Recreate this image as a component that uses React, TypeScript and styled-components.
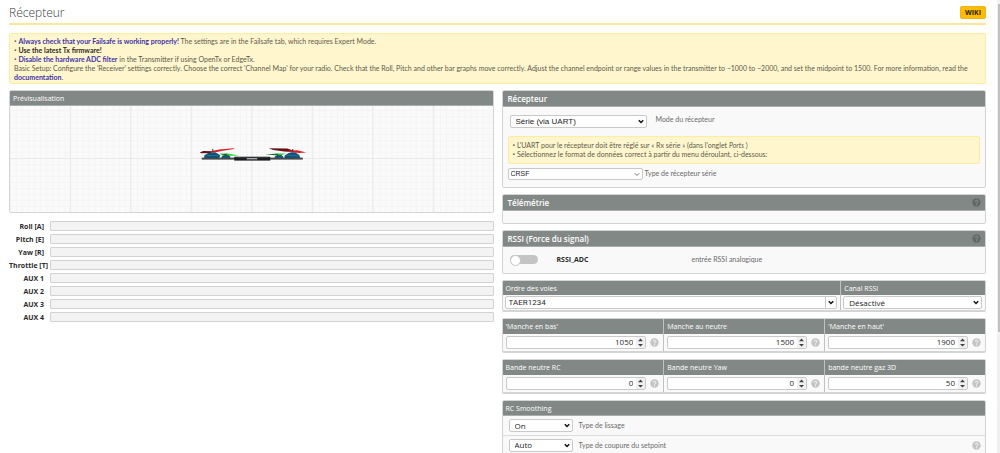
import React from "react";
import styled, { createGlobalStyle } from "styled-components";

const GlobalStyle = createGlobalStyle`
  * { box-sizing: border-box; }
  body {
    margin: 0;
    background: #fff;
    color: #6a6a6a;
    font-family: "Open Sans", "Noto Sans", sans-serif;
    font-size: 7px;
    line-height: 9px;
    overflow: hidden;
  }
  input, select, button { font: inherit; margin: 0; }
`;

const Page = styled.div`
  display: flex;
  height: 100vh;
  overflow: hidden;
`;

const Content = styled.main`
  flex: 1;
  min-width: 0;
  padding: 4px 11px 0 9px;
`;

const ScrollTrack = styled.div`
  width: 3px;
  padding: 4px 0 0 1px;
  background: #f1f1f1;
`;

const ScrollThumb = styled.div`
  height: 73%;
  background: #c1c1c1;
`;

const TitleBar = styled.header`
  display: flex;
  justify-content: space-between;
  align-items: flex-start;
  height: 21px;
  border-bottom: 2px solid #ffe596;
`;

const Title = styled.h1`
  margin: 0;
  font-size: 12px;
  line-height: 18px;
  font-weight: 300;
  color: #3c3c3c;
`;

const WikiLink = styled.a`
  margin-top: 2px;
  width: 26px;
  height: 13px;
  border-radius: 2px;
  background: #ffbb00;
  border: 1px solid #efb41a;
  color: #2a2400;
  font-size: 7px;
  line-height: 11px;
  font-weight: 700;
  text-align: center;
  text-decoration: none;
`;

const Note = styled.div<{ $inner?: boolean }>`
  margin: ${(p) => (p.$inner ? "8px 0 4px" : "8px 0 6px")};
  padding: ${(p) => (p.$inner ? "4px 4px" : "3px 4px 1px")};
  background: #fff6cd;
  border: 1px solid #ffec9e;
  border-radius: 2px;
  color: #5e5a4c;
  font-family: Lato, "Open Sans", sans-serif;
  b { color: #2e2b20; }
  a { color: #3f34a8; font-weight: 700; text-decoration: none; }
`;

const NoteLine = styled.div<{ $bullet?: boolean }>`
  &::before {
    content: ${(p) => (p.$bullet ? '"• "' : "none")};
    font-family: "Open Sans", sans-serif;
  }
`;

const Columns = styled.div`
  display: grid;
  grid-template-columns: 1fr 1fr;
  gap: 8px;
  align-items: start;
`;

const Column = styled.section`
  display: flex;
  flex-direction: column;
  gap: 6px;
  min-width: 0;
`;

const Panel = styled.section`
  border: 1px solid #d3d5d4;
  border-radius: 2px;
  background: #f9f9f9;
  overflow: hidden;
`;

const PanelHead = styled.h2<{ $small?: boolean }>`
  display: flex;
  justify-content: space-between;
  align-items: center;
  margin: 0;
  height: ${(p) => (p.$small ? 15 : 16)}px;
  padding: 0 4px 0 ${(p) => (p.$small ? 3 : 5)}px;
  background: #828885;
  border-bottom: 1px solid #a9adab;
  color: #fff;
  font-size: ${(p) => (p.$small ? 7 : 8)}px;
  font-weight: ${(p) => (p.$small ? 400 : 600)};
`;

const PreviewSvg = styled.svg`
  display: block;
  width: 100%;
  height: 106px;
  background: #fafafa;
`;

const Bars = styled.div`
  display: flex;
  flex-direction: column;
  gap: 3px;
  padding-top: 2px;
`;

const BarRow = styled.div`
  display: flex;
  align-items: center;
  gap: 6px;
  height: 10px;
`;

const BarLabel = styled.span`
  width: 35px;
  white-space: nowrap;
  text-align: right;
  font-weight: 700;
  color: #2b2b2b;
`;

const Bar = styled.div`
  flex: 1;
  height: 10px;
  border: 1px solid #d2d2d2;
  border-radius: 1px;
  background: #f3f3f3;
`;

const PanelBody = styled.div`
  padding: 8px 5px 7px;
`;

const Caption = styled.label`
  font-family: Lato, "Open Sans", sans-serif;
`;

const Field = styled.div<{ $indent?: boolean }>`
  display: flex;
  align-items: center;
  gap: ${(p) => (p.$indent ? 9 : 2)}px;
  padding-left: ${(p) => (p.$indent ? 2 : 0)}px;
  label { margin-bottom: ${(p) => (p.$indent ? 4 : 1)}px; }
`;

const SelectBox = styled.span<{ $w?: number; $h?: number }>`
  display: grid;
  align-items: center;
  width: ${(p) => (p.$w ? `${p.$w}px` : "100%")};
  height: ${(p) => p.$h || 13}px;
  > * { grid-area: 1 / 1; }
  svg { justify-self: end; margin-right: 3px; pointer-events: none; }
`;

const SelectControl = styled.select<{ $arial?: boolean; $small?: boolean; $h?: number }>`
  appearance: none;
  width: 100%;
  height: ${(p) => p.$h || 13}px;
  padding: 0 10px 0 ${(p) => (p.$small ? 2 : 5)}px;
  border: 1px solid #c9c9c9;
  border-radius: 2px;
  background: #fff;
  color: #1c1c1c;
  font-family: ${(p) => (p.$arial ? '"Liberation Sans", sans-serif' : '"Open Sans", sans-serif')};
  font-size: ${(p) => (p.$small ? 7 : 8)}px;
  line-height: 10px;
`;

const EmptyBody = styled.div`
  height: 12px;
`;

const RssiRow = styled.div`
  display: grid;
  grid-template-columns: 47px 135px 1fr;
  align-items: center;
  height: 26px;
  padding: 0 6px 2px 7px;
`;

const Switch = styled.input`
  appearance: none;
  display: block;
  width: 28px;
  height: 9px;
  border-radius: 5px;
  background: #c4c4c4;
  &::before {
    content: "";
    display: block;
    width: 9px;
    height: 9px;
    border: 1px solid #c4c4c4;
    border-radius: 50%;
    background: #fff;
  }
  &:checked { background: #ffbb00; }
  &:checked::before { margin-left: auto; }
`;

const SwitchLabel = styled.label`
  font-weight: 700;
  color: #2b2b2b;
`;

const Table = styled.table<{ $pad: string; $head: number }>`
  width: 100%;
  table-layout: fixed;
  border-collapse: separate;
  border-spacing: 0;
  border: 1px solid #d3d5d4;
  border-bottom-width: 2px;
  border-radius: 2px;
  background: #f9f9f9;
  th {
    height: ${(p) => p.$head}px;
    padding: 0 3px;
    background: #828885;
    color: #fff;
    font-weight: 400;
    text-align: left;
  }
  td { padding: ${(p) => p.$pad}; }
  th + th, td + td { border-left: 1px solid #bfc2c0; }
`;

const TableCol = styled.col<{ $w: string }>`
  width: ${(p) => p.$w};
`;

const Combo = styled.span`
  display: flex;
  height: 13px;
  border: 1px solid #c9c9c9;
  border-radius: 2px;
  background: #fff;
  input {
    flex: 1;
    min-width: 0;
    padding: 0 3px;
    border: 0;
    background: transparent;
    color: #2b2b2b;
    font-family: Roboto, "Liberation Sans", sans-serif;
    font-size: 8px;
  }
  button {
    display: grid;
    place-items: center;
    width: 11px;
    padding: 0;
    border: 0;
    border-left: 1px solid #c9c9c9;
    background: transparent;
  }
`;

const NumberCell = styled.span`
  display: flex;
  align-items: center;
  gap: 4px;
`;

const NumberBox = styled.span`
  flex: 1;
  display: flex;
  align-items: stretch;
  height: 13px;
  border: 1px solid #c9c9c9;
  border-radius: 2px;
  background: #fff;
  overflow: hidden;
  input {
    flex: 1;
    width: 0;
    min-width: 0;
    padding: 0 3px 1px 0;
    border: 0;
    background: transparent;
    color: #2b2b2b;
    font-size: 8px;
    line-height: 10px;
    text-align: right;
    appearance: textfield;
  }
  input::-webkit-inner-spin-button { display: none; }
  svg { display: block; height: 11px; background: #f1f1f1; }
`;

const SmoothingRow = styled.div`
  display: flex;
  align-items: center;
  gap: 6px;
  height: 19px;
  padding: 0 4px 0 6px;
  & + & { border-top: 1px solid #dcdcdc; }
  label { flex: 1; }
`;

function Arrow({ thin }: { thin?: boolean }) {
  return (
    <svg width="6" height="5" viewBox="0 0 6 5" aria-hidden="true">
      <path d="M0.8 1.2 L3 3.5 L5.2 1.2" fill="none" stroke={thin ? "#555" : "#111"} strokeWidth={thin ? 0.8 : 1.5} />
    </svg>
  );
}

function Help({ dark }: { dark?: boolean }) {
  return (
    <svg width="9" height="9" viewBox="0 0 18 18" role="img" aria-label="Aide">
      <circle cx="9" cy="9" r="8.4" fill={dark ? "#646866" : "#c4c4c4"} />
      <path d="M6.4 7 C6.4 3.8 11.8 3.8 11.8 7 C11.8 9 9.1 8.8 9.1 11" fill="none" stroke={dark ? "#8f9492" : "#fff"} strokeWidth="2" />
      <circle cx="9.1" cy="13.6" r="1.3" fill={dark ? "#8f9492" : "#fff"} />
    </svg>
  );
}

type SelectProps = { id: string; value: string; w?: number; h?: number; arial?: boolean; small?: boolean };

function Select({ id, value, w, h, arial, small }: SelectProps) {
  return (
    <SelectBox $w={w} $h={h}>
      <SelectControl id={id} $arial={arial} $small={small} $h={h} defaultValue={value}>
        <option>{value}</option>
      </SelectControl>
      <Arrow thin={small} />
    </SelectBox>
  );
}

const minorX = Array.from({ length: 80 }, (_, i) => 6.06 * i);
const majorX = Array.from({ length: 8 }, (_, i) => 60.5 * i);
const minorY = Array.from({ length: 18 }, (_, i) => 5.5 + 6 * i);

function Preview() {
  return (
    <PreviewSvg viewBox="9 106 484 106" preserveAspectRatio="xMidYMid slice" role="img" aria-label="Quadricoptère">
      {minorX.map((x) => (
        <line key={x} x1={10 + x} x2={10 + x} y1="105" y2="213" stroke="#f5f5f5" />
      ))}
      {minorY.map((y) => (
        <line key={y} x1="9" x2="494" y1={99 + y} y2={99 + y} stroke="#f5f5f5" />
      ))}
      {majorX.map((x) => (
        <line key={x} x1={9.5 + x} x2={9.5 + x} y1="105" y2="213" stroke="#e9e9e9" />
      ))}
      <line x1="9" x2="494" y1="158.5" y2="158.5" stroke="#e9e9e9" />
      <path d="M219 155 L226 153.2 L239 155.4 L230 155.8Z" fill="#27d32c" />
      <path d="M219 153.6 L227 154 L226 155.6Z" fill="#126618" />
      <path d="M265 154.4 L278 153.6 L279 155.6Z" fill="#176c1c" />
      <path d="M276 153.4 L286 153.6 L280 155.4Z" fill="#27d32c" />
      <path d="M221 158 L222 155.8 L224 155 L228 155 L230 156.4 L230 158Z" fill="#15587a" />
      <path d="M274 158 L275 156 L277 155 L281 155 L283 156.4 L283 158Z" fill="#15587a" />
      <rect x="201.5" y="157.6" width="101" height="2" fill="#46484b" />
      <path d="M204 158 L204 155.4 L207 153.4 L210 152.2 L215 152.2 L218 154 L220 155.6 L219 158Z" fill="#135273" />
      <path d="M206 155.5 H218" stroke="#1c7199" />
      <path d="M284 158 L284.5 155.5 L288 153.3 L291 152.2 L295 152.2 L299 155 L300 158Z" fill="#135273" />
      <path d="M286 155.5 H298" stroke="#1c7199" />
      <path d="M199.5 152.4 L203 151 L213 151.2 L210 153 L201 153.2Z" fill="#651013" />
      <path d="M209 151.5 L219 149.6 L233 148.2 L234 149 L224 150.5 L214 152.5Z" fill="#d52022" />
      <path d="M268.5 148.2 L287 148.5 L293 150.5 L292 152 L284 151.5 L273 150Z" fill="#681013" />
      <path d="M288 150.5 L297 150.3 L306 152.4 L299 153 L290 152Z" fill="#df2024" />
      <path d="M212.5 149 V152 M292.5 149 V152" stroke="#263f50" />
      <rect x="234" y="156.8" width="36" height="3.8" fill="#1d1e20" />
      <path d="M236 157.3 H268" stroke="#4b4d50" strokeWidth="0.7" />
      <rect x="246.5" y="158" width="10.5" height="1.4" fill="#a2a4a7" />
    </PreviewSvg>
  );
}

type NumberColumn = { id: string; label: string; value: number };

function NumberTable({ columns }: { columns: NumberColumn[] }) {
  return (
    <Table $pad="2px 4px 2px 3px" $head={15}>
      <thead>
        <tr>
          {columns.map((c) => (
            <th key={c.id} scope="col"><label htmlFor={c.id}>{c.label}</label></th>
          ))}
        </tr>
      </thead>
      <tbody>
        <tr>
          {columns.map((c) => (
            <td key={c.id}>
              <NumberCell>
                <NumberBox>
                  <input id={c.id} type="number" defaultValue={c.value} />
                  <svg width="9" height="11" viewBox="0 0 9 11" aria-hidden="true">
                    <path d="M2 4.2 L4.5 1.6 L7 4.2Z M2 7 L4.5 9.6 L7 7Z" fill="#444" />
                  </svg>
                </NumberBox>
                <Help />
              </NumberCell>
            </td>
          ))}
        </tr>
      </tbody>
    </Table>
  );
}

const channels = ["Roll [A]", "Pitch [E]", "Yaw [R]", "Throttle [T]", "AUX 1", "AUX 2", "AUX 3", "AUX 4"];

const sticks: NumberColumn[] = [
  { id: "stick-min", label: "'Manche en bas'", value: 1050 },
  { id: "stick-center", label: "Manche au neutre", value: 1500 },
  { id: "stick-max", label: "'Manche en haut'", value: 1900 },
];

const deadbands: NumberColumn[] = [
  { id: "deadband", label: "Bande neutre RC", value: 0 },
  { id: "yaw-deadband", label: "Bande neutre Yaw", value: 0 },
  { id: "deadband-3d", label: "bande neutre gaz 3D", value: 50 },
];

export default function App() {
  return (
    <Page>
      <GlobalStyle />
      <Content>
        <TitleBar>
          <Title>Récepteur</Title>
          <WikiLink href="#wiki">WIKI</WikiLink>
        </TitleBar>
        <Note>
          <NoteLine $bullet>
            <a href="#failsafe">Always check that your Failsafe is working properly!</a> The settings are in the Failsafe tab, which requires Expert Mode.
          </NoteLine>
          <NoteLine $bullet><b>Use the latest Tx firmware!</b></NoteLine>
          <NoteLine $bullet>
            <a href="#adc">Disable the hardware ADC filter</a> in the Transmitter if using OpenTx or EdgeTx.
          </NoteLine>
          <NoteLine>
            Basic Setup: Configure the 'Receiver' settings correctly. Choose the correct 'Channel Map' for your radio. Check that the Roll, Pitch and other bar graphs move correctly. Adjust the channel endpoint or range values in the transmitter to ~1000 to ~2000, and set the midpoint to 1500. For more information, read the<br />
            <a href="#documentation">documentation</a>.
          </NoteLine>
        </Note>
        <Columns>
          <Column>
            <Panel>
              <PanelHead $small>Prévisualisation</PanelHead>
              <Preview />
            </Panel>
            <Bars>
              {channels.map((name) => (
                <BarRow key={name}>
                  <BarLabel>{name}</BarLabel>
                  <Bar />
                </BarRow>
              ))}
            </Bars>
          </Column>
          <Column>
            <Panel>
              <PanelHead>Récepteur</PanelHead>
              <PanelBody>
                <Field $indent>
                  <Select id="rx-mode" value="Série (via UART)" w={137} arial />
                  <Caption htmlFor="rx-mode">Mode du récepteur</Caption>
                </Field>
                <Note $inner>
                  <NoteLine $bullet>
                    L'UART pour le récepteur doit être réglé sur « Rx série » (dans l'onglet <i>Ports</i> )
                  </NoteLine>
                  <NoteLine $bullet>
                    Sélectionnez le format de données correct à partir du menu déroulant, ci-dessous:
                  </NoteLine>
                </Note>
                <Field>
                  <Select id="serial-rx" value="CRSF" w={135} h={12} arial small />
                  <Caption htmlFor="serial-rx">Type de récepteur série</Caption>
                </Field>
              </PanelBody>
            </Panel>
            <Panel>
              <PanelHead>Télémétrie<Help dark /></PanelHead>
              <EmptyBody />
            </Panel>
            <Panel>
              <PanelHead>RSSI (Force du signal)<Help dark /></PanelHead>
              <RssiRow>
                <Switch id="rssi-adc" type="checkbox" />
                <SwitchLabel htmlFor="rssi-adc">RSSI_ADC</SwitchLabel>
                <Caption htmlFor="rssi-adc">entrée RSSI analogique</Caption>
              </RssiRow>
            </Panel>
            <Table $pad="1px 3px 1px 2px" $head={14}>
              <colgroup>
                <TableCol $w="70%" />
                <TableCol $w="30%" />
              </colgroup>
              <thead>
                <tr>
                  <th scope="col"><label htmlFor="channel-map">Ordre des voies</label></th>
                  <th scope="col"><label htmlFor="rssi-channel">Canal RSSI</label></th>
                </tr>
              </thead>
              <tbody>
                <tr>
                  <td>
                    <Combo>
                      <input id="channel-map" type="text" defaultValue="TAER1234" />
                      <button type="button" aria-label="Choisir l'ordre des voies"><Arrow /></button>
                    </Combo>
                  </td>
                  <td><Select id="rssi-channel" value="Désactivé" /></td>
                </tr>
              </tbody>
            </Table>
            <NumberTable columns={sticks} />
            <NumberTable columns={deadbands} />
            <Panel>
              <PanelHead $small>RC Smoothing</PanelHead>
              <SmoothingRow>
                <Select id="smoothing" value="On" w={64} />
                <Caption htmlFor="smoothing">Type de lissage</Caption>
              </SmoothingRow>
              <SmoothingRow>
                <Select id="setpoint" value="Auto" w={64} />
                <Caption htmlFor="setpoint">Type de coupure du setpoint</Caption>
                <Help />
              </SmoothingRow>
            </Panel>
          </Column>
        </Columns>
      </Content>
      <ScrollTrack>
        <ScrollThumb />
      </ScrollTrack>
    </Page>
  );
}
